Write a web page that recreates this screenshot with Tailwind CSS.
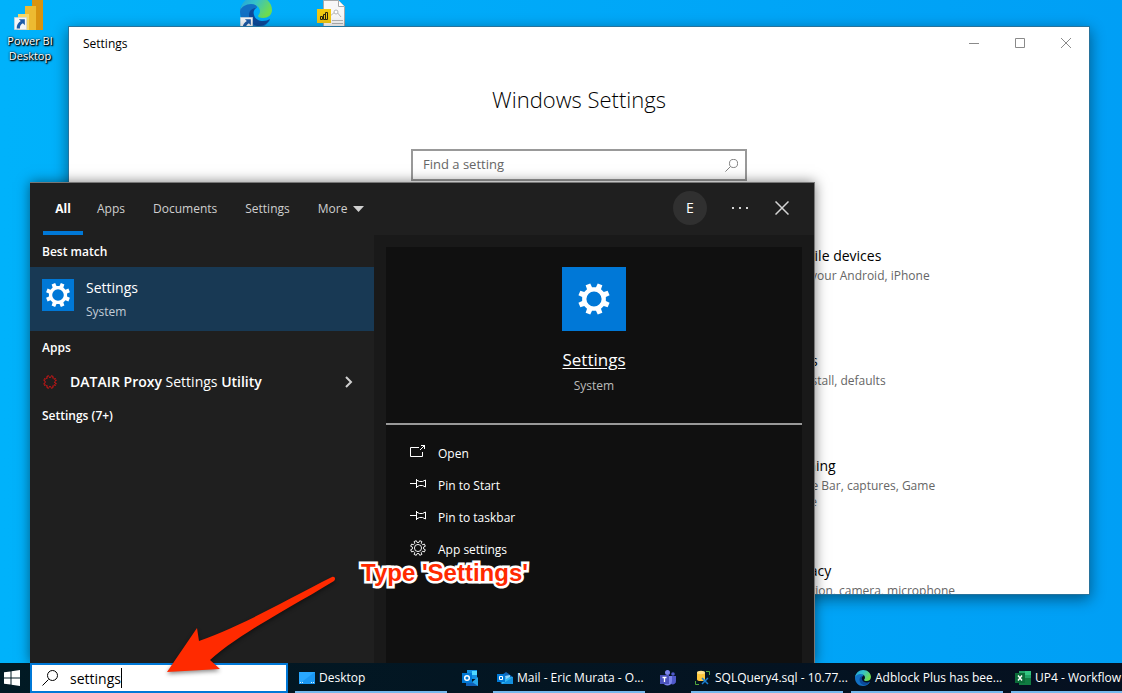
<!DOCTYPE html>
<html lang="en">
<head>
  <meta charset="UTF-8">
  <meta name="viewport" content="width=device-width, initial-scale=1.0">
  <title>Windows Search - Settings</title>
  <script src="https://cdn.jsdelivr.net/npm/@tailwindcss/browser@4"></script>
</head>
<body class="font-['Open_Sans','Noto_Sans',sans-serif] text-xs">

  <!-- shared shapes -->
  <svg class="absolute h-0 w-0" aria-hidden="true">
    <linearGradient id="edgeTop" x1="0" y1="0" x2="1" y2=".5"><stop offset="0" stop-color="#1d9fdf"/><stop offset=".5" stop-color="#35c1c9"/><stop offset="1" stop-color="#6fdc4f"/></linearGradient>
    <symbol id="gear" viewBox="-17 -17 34 34">
      <path stroke-linejoin="round" fill-rule="evenodd" d="M11.84 1.98 15.56 3.74 13.64 8.36 9.77 6.97 6.97 9.77 8.36 13.64 3.74 15.56 1.98 11.84H-1.98L-3.74 15.56-8.36 13.64-6.97 9.77-9.77 6.97-13.64 8.36-15.56 3.74-11.84 1.98V-1.98L-15.56-3.74-13.64-8.36-9.77-6.97-6.97-9.77-8.36-13.64-3.74-15.56-1.98-11.84H1.98L3.74-15.56 8.36-13.64 6.97-9.77 9.77-6.97 13.64-8.36 15.56-3.74 11.84-1.98ZM7.6 0A7.6 7.6 0 1 0-7.6 0A7.6 7.6 0 1 0 7.6 0Z"/>
    </symbol>
    <symbol id="pin" viewBox="0 0 16 10">
      <path fill="none" stroke="currentColor" d="M0 4.500h6M6.500 0v9M6.500 1l3 1.500h3l3-1.500v7l-3-1.500h-3L6.500 8"/>
    </symbol>
    <symbol id="edge" viewBox="0 0 32 32">
      <path fill="#1170c4" d="M0 16C0 8 6 5 11 6c4 1 6 4 6 6-4 0-5 3-5 6 0 5 5 8 10 8 4 0 6-1 8-2-3 5-8 8-14 8C7 32 0 25 0 16Z"/>
      <path fill="#0c4a9b" d="M9 19c0-5 4-7 7-7-2 2-3 4-2 7 1 4 5 6 9 6 3 0 5-1 7-2-2 4-6 7-11 7-6 0-10-5-10-11Z"/>
      <path fill="url(#edgeTop)" d="M0 15C1 6 8 0 16 0c10 0 16 7 16 14 0 5-4 8-9 8-3 0-5-1-5-2s2-2 2-5c0-4-4-7-9-7C6 8 1 11 0 15Z"/>
    </symbol>
    <symbol id="shortcut" viewBox="0 0 12 12">
      <path fill="#f4f6f8" stroke="#b9c3cd" stroke-width=".5" d="M.25.25h11.500v11.500H.25z"/>
      <path fill="#1c5ba8" d="M4.500 2H10v5.500L8.200 5.700C6 7 5.300 8.500 5.500 10.500H2.500C2.300 7.500 4 5 6.300 3.800Z"/>
    </symbol>
    <symbol id="loupe" viewBox="0 0 16 16">
      <path fill="none" stroke="currentColor" d="M6.500 9.500.5 15.500M15.500 5.500a5 5 0 1 1-10 0a5 5 0 1 1 10 0"/>
    </symbol>
  </svg>

  <div class="relative h-screen overflow-hidden bg-linear-to-r from-[#00b2fb] to-[#009ff5]">

    <!-- desktop icons -->
    <div class="absolute left-0 top-0 flex w-[60px] flex-col items-center text-center text-[11px] leading-[15px] text-white [text-shadow:1px_1px_2px_#000,0_0_2px_#000,1px_1px_1px_#000]">
      <svg class="h-[32px] w-[32px]" viewBox="0 0 32 32">
        <path fill="#d9930f" d="M18 0h11v30H18z"/>
        <path fill="#edbb31" d="M11 6h11v24H11z"/>
        <path fill="#f7d765" d="M4 14h11v16H4z"/>
        <use href="#shortcut" x="0" y="17" width="13" height="13"/>
      </svg>
      <span class="mt-px">Power BI<br>Desktop</span>
    </div>
    <svg class="absolute left-[240px] top-[-4px] h-8 w-8" viewBox="0 0 32 32">
      <use href="#edge" width="32" height="32"/>
      <use href="#shortcut" x="0" y="21" width="13" height="13"/>
    </svg>
    <svg class="absolute left-[317px] top-0 h-8 w-8" viewBox="0 0 32 32">
      <path fill="#f7f7f7" stroke="#a8a8a8" d="M6.500.5h15l6 6v25h-21z"/>
      <path fill="#fff" stroke="#a8a8a8" d="M21.500.5v6h6"/>
      <path fill="none" stroke="#b5b5b5" d="m12 17 7-6 5 6M15 20.500h11M15 23.500h11"/>
      <circle cx="19" cy="12" r="2" fill="#fff" stroke="#b5b5b5"/>
      <path fill="#f2c811" d="M0 9h14v14H0z"/>
      <path fill="none" stroke="#2b2310" d="M3.500 16.500h2v3h-2zM6.500 14.500h2v5h-2zM8.500 12.500h2v7h-2z"/>
    </svg>

    <!-- settings window -->
    <section class="absolute top-[26px] right-8 bottom-[98px] left-[68px] overflow-hidden border border-[#27739c] bg-white text-black shadow-[0_4px_14px_rgba(0,0,0,.45)]">
      <header class="flex h-8 items-center justify-between pl-[14px]">
        <span class="pt-0.5">Settings</span>
        <div class="flex text-[#8a8a8a]">
          <button aria-label="Minimize" class="grid h-8 w-[46px] place-items-center"><svg class="h-[10px] w-[10px]" fill="none" stroke="currentColor"><path d="M0 5.500h10"/></svg></button>
          <button aria-label="Maximize" class="grid h-8 w-[46px] place-items-center"><svg class="h-[10px] w-[10px]" fill="none" stroke="currentColor"><path d="M.5.5h9v9h-9z"/></svg></button>
          <button aria-label="Close" class="grid h-8 w-[46px] place-items-center"><svg class="h-[10px] w-[10px]" fill="none" stroke="currentColor"><path d="m0 0 10 10M10 0 0 10"/></svg></button>
        </div>
      </header>
      <h1 class="mt-6 text-center text-[22px] leading-8 font-light">Windows Settings</h1>
      <label class="mx-auto mt-[34px] flex h-8 w-[336px] items-center border-2 border-[#999] pr-[7px] pl-[10px] text-[#666]">
        <input type="text" aria-label="Find a setting" placeholder="Find a setting" class="min-w-0 flex-1 text-[13px] outline-none placeholder:text-[#666]">
        <svg class="h-[13px] w-[13px]"><use href="#loupe"/></svg>
      </label>
      <div class="mt-[66px] ml-[716px] grid auto-rows-[105px] grid-cols-[190px] leading-4 text-[#666]">
        <a href="#"><h2 class="mb-[3px] text-sm leading-[18px] text-black">Mobile devices</h2>Link your Android, iPhone</a>
        <a href="#"><h2 class="mb-[3px] text-sm leading-[18px] text-black">Apps</h2>Uninstall, defaults</a>
        <a href="#"><h2 class="mb-[3px] text-sm leading-[18px] text-black">Gaming</h2>Game Bar, captures, Game<br>Mode</a>
        <a href="#"><h2 class="mb-[3px] text-sm leading-[18px] text-black">Privacy</h2>Location, camera, microphone</a>
      </div>
    </section>

    <!-- search flyout -->
    <section class="absolute top-[182px] bottom-[30px] left-[30px] flex w-[785px] flex-col border-t border-r border-[#777] bg-[#191919] text-white shadow-[0_0_12px_rgba(0,0,0,.5)]">
      <header class="flex h-[52px] shrink-0 items-center justify-between bg-[#1f1f1f] pr-[21px] pl-[13px]">
        <nav class="flex h-full text-[#cfcfcf]">
          <button class="w-10 border-b-4 border-[#0078d7] pt-1 font-bold text-white">All</button>
          <button class="px-[14px]">Apps</button>
          <button class="px-[14px]">Documents</button>
          <button class="px-[14px]">Settings</button>
          <button class="flex items-center gap-[6px] px-[14px]">More <svg class="h-[6px] w-[11px]" fill="currentColor"><path d="M0 0h11L5.500 6z"/></svg></button>
        </nav>
        <div class="mb-0.5 flex items-center text-[#d4d4d4]">
          <button class="h-[34px] w-[34px] rounded-full bg-[#303030] text-sm text-white">E</button>
          <button aria-label="Options" class="ml-[25px]"><svg class="h-2 w-4" fill="currentColor"><path d="M0 3h2v2H0zM7 3h2v2H7zM14 3h2v2h-2z"/></svg></button>
          <button aria-label="Close" class="ml-[23px] p-1"><svg class="h-[14px] w-[14px]" fill="none" stroke="currentColor" stroke-width="1.500"><path d="m.5.5 13 13M13.500.5l-13 13"/></svg></button>
        </div>
      </header>

      <div class="flex min-h-0 flex-1">
        <div class="w-[344px] bg-[#1f1f1f]">
          <h2 class="flex h-8 items-center pt-0.5 pl-3 font-semibold">Best match</h2>
          <button class="flex h-16 w-full gap-3 bg-[#183954] p-3 text-left">
            <span class="grid h-8 w-8 place-items-center bg-[#0078d7]"><svg class="h-[26px] w-[26px] fill-white"><use href="#gear"/></svg></span>
            <span class="flex flex-col">
              <span class="text-sm leading-[18px]">Settings</span>
              <span class="mt-[7px] leading-4 text-[#c3cdd6]">System</span>
            </span>
          </button>
          <h2 class="flex h-8 items-center pt-0.5 pl-3 font-semibold">Apps</h2>
          <button class="flex h-9 w-full items-center pt-0.5 pr-5 pl-3 text-left text-sm">
            <svg class="h-4 w-4" viewBox="-20 -20 40 40"><path fill="none" stroke="#f01414" stroke-width="2.500" stroke-dasharray="6 1.500" d="M11.84 1.98 15.56 3.74 13.64 8.36 9.77 6.97 6.97 9.77 8.36 13.64 3.74 15.56 1.98 11.84H-1.98L-3.74 15.56-8.36 13.64-6.97 9.77-9.77 6.97-13.64 8.36-15.56 3.74-11.84 1.98V-1.98L-15.56-3.74-13.64-8.36-9.77-6.97-6.97-9.77-8.36-13.64-3.74-15.56-1.98-11.84H1.98L3.74-15.56 8.36-13.64 6.97-9.77 9.77-6.97 13.64-8.36 15.56-3.74 11.84-1.98Z"/></svg>
            <span class="ml-3 flex-1"><b class="font-semibold">DATAIR Proxy</b> Settings <b class="font-semibold">Utility</b></span>
            <svg class="h-3 w-[9px] text-[#d0d0d0]" fill="none" stroke="currentColor" stroke-width="2"><path d="m1 1 5 5-5 5"/></svg>
          </button>
          <h2 class="flex h-8 items-center pt-0.5 pl-3 font-semibold">Settings (7+)</h2>
        </div>

        <div class="mx-3 mt-3 flex-1 bg-[#101010]">
          <div class="flex h-[178px] flex-col items-center border-b-2 border-[#999] pt-5">
            <span class="grid h-16 w-16 place-items-center bg-[#0078d7]"><svg class="h-[34px] w-[34px] fill-white"><use href="#gear"/></svg></span>
            <a href="#" class="mt-[17px] text-[17px] leading-6 underline underline-offset-2">Settings</a>
            <span class="mt-[6px] leading-4 text-[#bbb]">System</span>
          </div>
          <div class="flex flex-col pt-[13px] pl-6">
            <button class="flex h-8 items-center gap-3 text-left">
              <svg class="mb-1 h-4 w-4" fill="none" stroke="currentColor"><path d="M9 3.500H.5v9h12V8M10 6l5-5M11 1.500h3.500V5"/></svg>Open
            </button>
            <button class="flex h-8 items-center gap-3 text-left"><svg class="mb-1 h-[10px] w-4"><use href="#pin"/></svg>Pin to Start</button>
            <button class="flex h-8 items-center gap-3 text-left"><svg class="mb-1 h-[10px] w-4"><use href="#pin"/></svg>Pin to taskbar</button>
            <button class="flex h-8 items-center gap-3 text-left">
              <svg class="mb-1 h-4 w-4 fill-none stroke-white stroke-2"><use href="#gear"/></svg>App settings
            </button>
          </div>
        </div>
      </div>
    </section>

    <!-- taskbar -->
    <footer class="absolute inset-x-0 bottom-0 flex h-[30px] bg-linear-to-r from-[#011a24] to-[#051020] text-white">
      <button aria-label="Start" class="grid w-[30px] shrink-0 place-items-center pr-[6px]">
        <svg class="h-4 w-4" fill="#fff"><path d="M0 2.300 6.500 1.400v6.100H0zM7.500 1.200 16 0v7.500H7.500zM0 8.500h6.500v6.100L0 13.700zM7.500 8.500H16V16l-8.500-1.200z"/></svg>
      </button>
      <label class="mr-[7px] flex w-[258px] shrink-0 items-center border-2 border-[#0078d7] bg-white pl-[10px] text-black">
        <svg class="mr-3 h-4 w-4"><use href="#loupe"/></svg>
        <input type="text" aria-label="Search" value="settings" class="field-sizing-content pt-0.5 text-sm outline-none">
        <span class="h-5 w-px bg-black"></span>
      </label>
      <div class="flex gap-2 whitespace-nowrap">
        <button class="flex w-[152px] items-center gap-1 border-b-2 border-[#76b9ed] px-1 pt-0.5">
          <svg class="h-3 w-4 shrink-0"><path fill="#29a8ff" d="M0 0h16v12H0z"/><path fill="#0d87e8" d="M0 12 16 0v12z" opacity=".5"/><path stroke="#d9f0ff" stroke-dasharray="1 1" d="M1 10.500h3M12 10.500h3"/></svg>Desktop
        </button>
        <button aria-label="Outlook" class="grid w-[30px] place-items-center">
          <svg class="h-4 w-4"><path fill="#1490df" d="M5 0h10v9H5z"/><path fill="#50d9ff" d="M10 1h5v4h-5z"/><path fill="#28a8ea" d="M4 8l6 4 6-5v9H4z"/><path fill="#0f5fb5" d="M4 8l12 8H4z"/><path fill="#0078d4" d="M0 3h10v10H0z"/><circle cx="5" cy="8" r="2.300" fill="none" stroke="#fff" stroke-width="1.500"/></svg>
        </button>
        <button class="flex w-[152px] items-center gap-1 border-b-2 border-[#76b9ed] px-1 pt-0.5">
          <svg class="h-4 w-4 shrink-0"><path fill="#1066b8" d="M2 7 9 2l7 5v7H4z"/><path fill="#35b8f1" d="M4 8 16 7v7H5z"/><path fill="#8fd6fa" d="M8 6 13 5v2L9 9z"/><path fill="#1490df" d="m5 14 11-7v7z"/><path fill="#0078d4" d="M0 4h8v8H0z"/><path fill="none" stroke="#fff" d="M2.500 6.500h3v3h-3z"/></svg>Mail - Eric Murata - O...
        </button>
        <button aria-label="Teams" class="grid w-[30px] place-items-center">
          <svg class="h-4 w-4"><circle cx="7.500" cy="2.500" r="2.500" fill="#7b83eb"/><circle cx="13" cy="4" r="1.800" fill="#5059c9"/><path fill="#5059c9" d="M10 6h6v5c0 3-3 4-5 3z"/><path fill="#7b83eb" d="M3 6h9v5c0 6-9 6-9 0z"/><path fill="#4b53bc" d="M0 5h9v9H0z"/><path stroke="#fff" stroke-width="1.300" d="M2.500 7.500h4M4.500 7.500V12"/></svg>
        </button>
        <button class="flex w-[152px] items-center gap-1 border-b-2 border-[#76b9ed] px-1 pt-0.5">
          <svg class="h-4 w-4 shrink-0" fill="none"><path fill="#ffc83d" d="M2 2.500v7c0 2 8 2 8 0v-7z"/><ellipse cx="6" cy="2.500" rx="4" ry="1.700" fill="#ffe28a"/><path stroke="#52a83c" d="M11 1.500h3.500V5M.5 11v3.500H4"/><path stroke="#1b7fd0" stroke-width="1.500" d="m7 8 6 6M13 8l-6 6"/></svg>SQLQuery4.sql - 10.77...
        </button>
        <button class="flex w-[152px] items-center gap-1 border-b-2 border-[#76b9ed] px-1 pt-0.5">
          <svg class="h-4 w-4 shrink-0"><use href="#edge"/></svg>Adblock Plus has bee...
        </button>
        <button class="flex w-[152px] items-center gap-1 border-b-2 border-[#76b9ed] px-1 pt-0.5">
          <svg class="h-4 w-4 shrink-0"><path fill="#21a366" d="M4 1h12v7H4z"/><path fill="#33c481" d="M10 1h6v4h-6z"/><path fill="#107c41" d="M4 8h12v7H4z"/><path fill="#0b6b38" d="M0 3h10v10H0z"/><path stroke="#fff" stroke-width="1.400" d="m3 5.500 4 5M7 5.500l-4 5"/></svg>UP4 - Workflow
        </button>
      </div>
    </footer>

    <!-- callout: arrow and label -->
    <svg class="absolute bottom-0 left-[160px] h-[120px] w-[180px] drop-shadow-[0_2px_2px_rgba(0,0,0,.45)]" viewBox="160 573 180 120">
      <path fill="#ff2a00" d="M167 672 197 628 199 641C240 627 290 598 332 577c3-1 4 2 2 4C290 608 240 633 210 660L220 669Z"/>
    </svg>
    <p class="absolute bottom-[106px] left-[361px] font-['Liberation_Sans',sans-serif] text-2xl leading-7 font-bold text-[#ff2a00] [-webkit-text-stroke:5px_#fff] [paint-order:stroke_fill]">Type 'Settings'</p>
  </div>
</body>
</html>
